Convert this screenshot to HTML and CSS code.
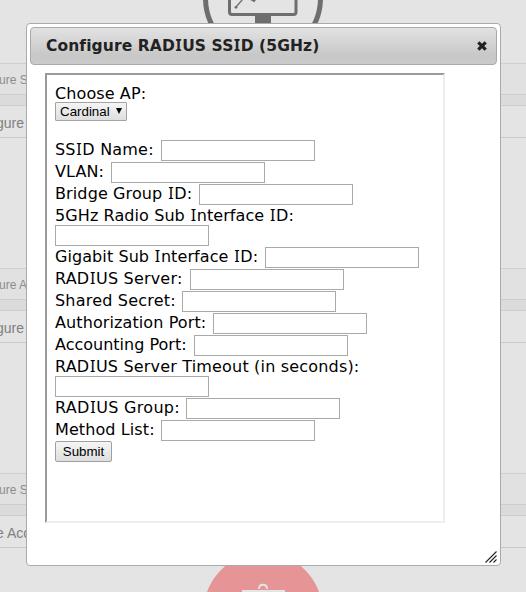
FILE: index.html
```
<!DOCTYPE html>
<html lang="en">
<head>
<meta charset="utf-8">
<title>Configure RADIUS SSID (5GHz)</title>
<link rel="stylesheet" href="styles.css">
</head>
<body>
<div class="page">
  <div class="hero">
    <svg width="122" height="64" viewBox="0 0 122 64">
      <circle cx="61" cy="-2" r="57.500" fill="none" stroke="#6e6e6e" stroke-width="5"/>
      <path d="M27.500 -5V12Q27.500 14.500 30 14.500H91.500Q94 14.500 94 12V-5" fill="none" stroke="#6e6e6e" stroke-width="3"/>
      <path d="M53 14h16v12H53z" fill="#6e6e6e"/>
      <path d="M34 7L47-8" fill="none" stroke="#6e6e6e" stroke-width="1.300"/>
      <circle cx="34" cy="7.300" r="1.400" fill="#6e6e6e"/>
      <path d="M45-3L52 1L55-3" fill="none" stroke="#6e6e6e" stroke-width="2"/>
    </svg>
  </div>
  <section class="panel"><p class="crumb">ure SSIDs</p><p class="band"></p><p class="item">gure SSIDs</p><div class="space"></div></section>
  <section class="panel"><p class="crumb">ure APs</p><p class="band"></p><p class="item">gure APs</p><div class="space"></div></section>
  <section class="panel"><p class="crumb">ure SNMP</p><p class="band"></p><p class="item">e Access</p></section>
  <div class="badge">
    <svg width="122" height="44" viewBox="0 0 122 44">
      <circle cx="61" cy="64" r="59.500" fill="#e59595"/>
      <path d="M40 42h43v2H40z" fill="#e4e4e4"/>
      <path d="M57 41Q57 36.700 61 36.700T65 41" fill="none" stroke="#e4e4e4" stroke-width="2"/>
    </svg>
  </div>
</div>
<div class="dialog">
  <header class="titlebar">
    <h1>Configure RAD<i>I</i>US SS<i>I</i>D (5GHz)</h1>
    <svg class="close" width="12" height="12" viewBox="0 0 12 12"><path d="M2.300 2.300L9.700 9.700M9.700 2.300L2.300 9.700" stroke="#222" stroke-width="3.200"/></svg>
  </header>
  <form class="frame">
    <div class="line choose"><label>Choose AP:</label></div>
    <div class="select">Cardinal<span class="arrow"></span></div>
    <div class="row"><label class="ssid">SS<i>I</i>D Name:</label><input type="text"></div>
    <div class="row"><label class="vlan">VLAN:</label><input type="text"></div>
    <div class="row"><label class="bridge">Bridge Group <i>I</i>D:</label><input type="text"></div>
    <div class="line"><label class="radio">5GHz Radio Sub <i>I</i>nterface <i>I</i>D:</label></div>
    <div class="row"><input type="text"></div>
    <div class="row"><label class="gigabit">Gigabit Sub <i>I</i>nterface <i>I</i>D:</label><input type="text"></div>
    <div class="row"><label class="server">RAD<i>I</i>US Server:</label><input type="text"></div>
    <div class="row"><label class="secret">Shared Secret:</label><input type="text"></div>
    <div class="row"><label class="auth">Authorization Port:</label><input type="text"></div>
    <div class="row"><label class="acct">Accounting Port:</label><input type="text"></div>
    <div class="line"><label class="timeout">RAD<i>I</i>US Server Timeout (in seconds):</label></div>
    <div class="row"><input type="text"></div>
    <div class="row"><label class="group">RAD<i>I</i>US Group:</label><input type="text"></div>
    <div class="row"><label class="method">Method List:</label><input type="text"></div>
    <button type="button">Submit</button>
  </form>
  <svg class="grip" width="12" height="12" viewBox="0 0 12 12"><path d="M.5 11.500L11.500 .5M4.500 11.500L11.500 4.500M8.500 11.500L11.500 8.500" stroke="#222" stroke-width="1.100"/></svg>
</div>
</body>
</html>
```
FILE: styles.css
```
* { box-sizing: border-box; }
html, body { margin: 0; height: 100%; overflow: hidden; }
body { background: #e4e4e4; font-family: "DejaVu Sans", sans-serif; font-size: 16px; color: #000; }
p, h1 { margin: 0; }
/* capital I with serifs */
i { font-family: "Noto Sans", sans-serif; font-style: normal; line-height: 0; letter-spacing: 0; margin: 0 .6px; }
.page { height: 592px; overflow: hidden; font-family: "Liberation Sans", Arial, sans-serif; color: #808080; }
.hero { height: 63px; display: flex; padding-left: 202px; }
.panel { white-space: nowrap; }
.crumb { height: 31px; line-height: 33px; border-top: 1px solid #cfcfcf; background: #e1e1e1; font-size: 12px; text-indent: -1px; color: #8c8c8c; }
.band { height: 12px; border: 1px solid #cdcdcd; border-width: 1px 0; background: #dbdbdb; }
.item { height: 32px; line-height: 35px; border-bottom: 1px solid #c9c9c9; font-size: 14px; text-indent: -4px; }
.space { height: 130px; }
.badge { height: 44px; padding-left: 202px; }
.dialog { position: absolute; left: 26px; top: 23px; width: 475px; height: 543px; padding: 3px; background: #fff; border: 1px solid #aaa; border-radius: 4px; }
.titlebar { display: flex; align-items: center; justify-content: space-between; height: 38px; padding: 0 8px 0 15px; border: 1px solid #aaa; border-radius: 4px; background: linear-gradient(#e2e2e2, #c8c8c8 75%, #cacaca); color: #222; }
.titlebar h1 { font-size: 15.500px; line-height: 20px; letter-spacing: .1px; white-space: nowrap; }
.close { display: block; }
.frame { width: 400px; height: 450px; margin: 8px 0 0 15px; padding: 9px 8px; border: 2px solid; border-color: #9a9a9a #eee #eee #9a9a9a; }
.line { height: 19px; line-height: 19px; white-space: nowrap; }
.choose { height: 18px; letter-spacing: .1px; }
.row { display: flex; height: 22px; }
.row label { flex: none; line-height: 20px; white-space: nowrap; }
input { display: block; width: 154px; height: 21px; margin: 0; padding: 0; border: 1px solid #a9a9a9; background: #fff; }
.ssid { width: 106px; letter-spacing: .2px; }
.vlan { width: 56px; letter-spacing: .1px; }
.bridge { width: 144px; letter-spacing: .12px; }
.radio { letter-spacing: .09px; }
.gigabit { width: 210px; letter-spacing: .08px; }
.server { width: 135px; letter-spacing: .2px; }
.secret { width: 127px; letter-spacing: .2px; }
.auth { width: 158px; letter-spacing: .1px; }
.acct { width: 139px; }
.timeout { letter-spacing: .18px; }
.group { width: 131px; letter-spacing: .3px; }
.method { width: 106px; letter-spacing: .1px; }
.select { display: flex; align-items: center; width: 72px; height: 19px; margin-bottom: 19px; padding: 0 4px; justify-content: space-between; border: 1px solid #a3a3a3; border-radius: 1px; background: linear-gradient(#f5f5f5, #dedede); font: 13.333px "Liberation Sans", Arial, sans-serif; }
.arrow { border: 3.500px solid transparent; border-top: 6px solid #000; border-bottom: 0; margin-top: -2px; }
button { display: block; width: 57px; height: 21px; margin-top: -1px; padding: 0; border: 1px solid #a0a0a0; border-radius: 2px; background: linear-gradient(#f6f6f6, #dedede); color: #000; font: 13.333px "Liberation Sans", Arial, sans-serif; }
.grip { position: absolute; right: 3px; bottom: 2px; }
```
